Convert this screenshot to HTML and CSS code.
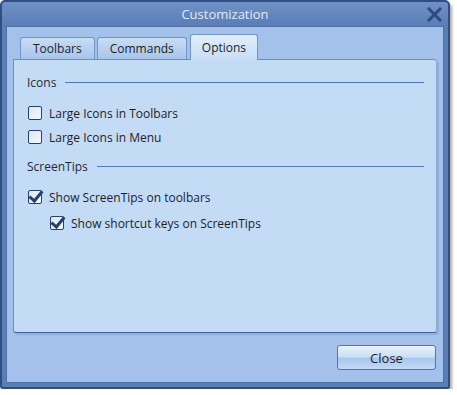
FILE: index.html
```html
<!DOCTYPE html>
<html lang="en">
<head>
    <meta charset="UTF-8">
    <title>Customization</title>
    <link rel="stylesheet" href="styles.css">
</head>
<body>
    <div class="window">
        <div class="title-bar">
            <span class="title">Customization</span>
            <button class="close-x" title="Close">
                <svg width="15" height="15" viewBox="0 0 15 15">
                    <path d="M2 2 L13 13 M13 2 L2 13" stroke="#2d4a7a" stroke-width="3" stroke-linecap="square"/>
                </svg>
            </button>
        </div>

        <div class="client">
            <div class="tabs">
                <div class="tab">Toolbars</div>
                <div class="tab">Commands</div>
                <div class="tab active">Options</div>
            </div>

            <div class="panel">
                <div class="group-title"><span>Icons</span><div class="rule"></div></div>
                <label class="check first"><span class="box"></span>Large Icons in Toolbars</label>
                <label class="check"><span class="box"></span>Large Icons in Menu</label>

                <div class="group-title tips"><span>ScreenTips</span><div class="rule"></div></div>
                <label class="check first"><span class="box checked"></span>Show ScreenTips on toolbars</label>
                <label class="check sub"><span class="box checked"></span>Show shortcut keys on ScreenTips</label>
            </div>

            <div class="footer">
                <button class="btn">Close</button>
            </div>
        </div>
    </div>
</body>
</html>
```

FILE: styles.css
```css
* {
    box-sizing: border-box;
}

body {
    margin: 0;
    background: #fff;
    font-family: 'Open Sans', 'Noto Sans', sans-serif;
    font-size: 12px;
    color: #1e1e1e;
}

.window {
    width: 450px;
    height: 389px;
    background: #5b7eb6;
    border: 2px solid #2f4f82;
    border-radius: 5px 5px 3px 3px;
    box-shadow: 2px 3px 3px rgba(0, 0, 0, 0.35);
    display: flex;
    flex-direction: column;
}

.title-bar {
    height: 24px;
    flex-shrink: 0;
    display: flex;
    align-items: center;
    justify-content: center;
    position: relative;
    background: linear-gradient(#6f91c6, #5a7db6);
    border-radius: 4px 4px 0 0;
}

.title {
    color: #e0eaf7;
    font-size: 13px;
}

.close-x {
    position: absolute;
    right: 6px;
    top: 5px;
    background: none;
    border: none;
    padding: 0;
    line-height: 0;
}

.client {
    flex: 1;
    margin: 0 4px 4px 4px;
    background: #a3c1ea;
    border: 1px solid #4f72aa;
    display: flex;
    flex-direction: column;
    padding: 7px 6px 0 6px;
}

.tabs {
    display: flex;
    padding-left: 7px;
    gap: 2px;
    height: 25px;
    flex-shrink: 0;
    align-items: flex-end;
}

.tab {
    height: 22px;
    padding: 0 12px;
    display: flex;
    align-items: center;
    border: 1px solid #7394c8;
    border-bottom: none;
    border-radius: 3px 3px 0 0;
    background: linear-gradient(#c8dcf4, #a9c5ea);
    color: #1e1e1e;
}

.tab.active {
    height: 26px;
    padding: 0 11px;
    margin-left: 1px;
    background: linear-gradient(#e2eefb, #c8ddf6);
    position: relative;
    z-index: 1;
    margin-bottom: -1px;
}

.panel {
    height: 274px;
    flex-shrink: 0;
    background: #c4dbf6;
    border: 1px solid #6c8dc2;
    border-right-color: #8aa8d4;
    border-bottom-color: #3f5f98;
    border-radius: 0 3px 3px 3px;
    box-shadow: 2px 2px 1px #8fb0dc;
    padding: 14px 12px 0 13px;
}

.group-title {
    display: flex;
    align-items: center;
    gap: 9px;
    height: 16px;
    color: #1e2a3c;
}

.rule {
    flex: 1;
    height: 1px;
    margin-top: 1px;
    background: #5277b6;
}

.group-title.tips {
    margin-top: 13px;
}

.check {
    display: flex;
    align-items: center;
    gap: 7px;
    height: 16px;
    margin-top: 8px;
    margin-left: 1px;
}

.check.first {
    margin-top: 15px;
}

.check.sub {
    margin-left: 23px;
    margin-top: 10px;
}

.box {
    width: 14px;
    height: 14px;
    border: 1px solid #26416e;
    border-radius: 2px;
    background: linear-gradient(135deg, #dbe6f4, #f6f9fd);
    position: relative;
}

.box.checked::after {
    content: '';
    position: absolute;
    left: 3px;
    top: -3px;
    width: 5px;
    height: 11px;
    border: solid #26416e;
    border-width: 0 3px 3px 0;
    transform: rotate(40deg);
}

.footer {
    flex: 1;
    display: flex;
    justify-content: flex-end;
    align-items: center;
    padding-right: 1px;
}

.btn {
    width: 99px;
    height: 25px;
    font-family: inherit;
    font-size: 13px;
    color: #1e1e1e;
    border: 1px solid #5675aa;
    border-radius: 3px;
    background: linear-gradient(#e8f0fb 0%, #cfdff5 45%, #a8c6ee 55%, #c3daf7 100%);
}
```
